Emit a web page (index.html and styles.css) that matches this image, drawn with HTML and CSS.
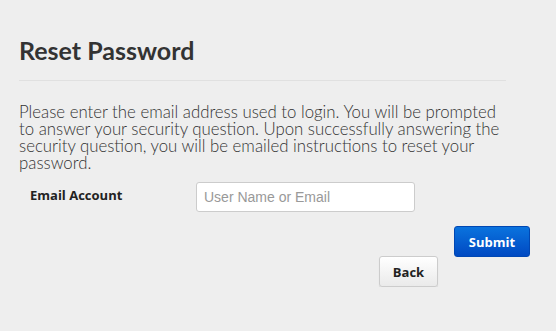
FILE: index.html
```html
<!DOCTYPE html>
<html lang="en">
<head>
    <meta charset="UTF-8">
    <meta name="viewport" content="width=device-width, initial-scale=1.0">
    <title>Reset Password</title>
    <link rel="stylesheet" href="styles.css">
</head>
<body>
    <div class="page">
        <h1 class="page-title">Reset Password</h1>

        <p class="intro">Please enter the email address used to login. You will be prompted to answer your security question. Upon successfully answering the security question, you will be emailed instructions to reset your password.</p>

        <form class="reset-form">
            <div class="form-row">
                <label for="email">Email Account</label>
                <input type="text" id="email" placeholder="User Name or Email">
            </div>
            <div class="actions">
                <button type="submit" class="btn btn-primary">Submit</button>
                <button type="button" class="btn btn-default">Back</button>
            </div>
        </form>
    </div>
</body>
</html>
```

FILE: styles.css
```css
body {
    margin: 0;
    padding: 0;
    background-color: #eeeeee;
    font-family: 'Lato', 'Open Sans', sans-serif;
    color: #333;
}

.page {
    padding: 32px 50px 0 18px;
}

.page-title {
    margin: 0 0 0 1px;
    padding-bottom: 12px;
    border-bottom: 1px solid #e0e0e0;
    font-size: 25px;
    font-weight: 700;
    line-height: 36px;
    color: #333;
}

.intro {
    margin: 22px 0 0 1px;
    font-size: 16.8px;
    font-weight: 300;
    line-height: 17px;
    color: #333;
}

.form-row {
    display: flex;
    align-items: flex-start;
    margin-top: 11px;
}

.form-row label {
    width: 166px;
    padding: 4px 0 0 12px;
    font-family: 'Open Sans', sans-serif;
    font-size: 13px;
    font-weight: 700;
    color: #222;
}

.form-row input {
    width: 219px;
    height: 30px;
    box-sizing: border-box;
    padding: 4px 7px;
    border: 1px solid #ccc;
    border-radius: 3px;
    background: #fff;
    font-family: 'Liberation Sans', Arial, sans-serif;
    font-size: 14px;
    color: #333;
}

.form-row input::placeholder {
    color: #999;
}

.actions {
    display: flex;
    flex-direction: column;
    align-items: flex-end;
    margin: 14px -24px 0 0;
}

.btn {
    height: 31px;
    box-sizing: border-box;
    border-radius: 3px;
    font-family: 'Open Sans', sans-serif;
    font-size: 13px;
    font-weight: 700;
    cursor: pointer;
}

.btn-primary {
    width: 76px;
    border: 1px solid #0047b3;
    background: linear-gradient(#0a73de, #0049c2);
    color: #fff;
}

.btn-default {
    width: 59px;
    margin: -1px 92px 0 0;
    border: 1px solid #ccc;
    background: linear-gradient(#ffffff, #eaeaea);
    color: #222;
    box-shadow: 0 1px 1px rgba(0, 0, 0, 0.1);
}
```
